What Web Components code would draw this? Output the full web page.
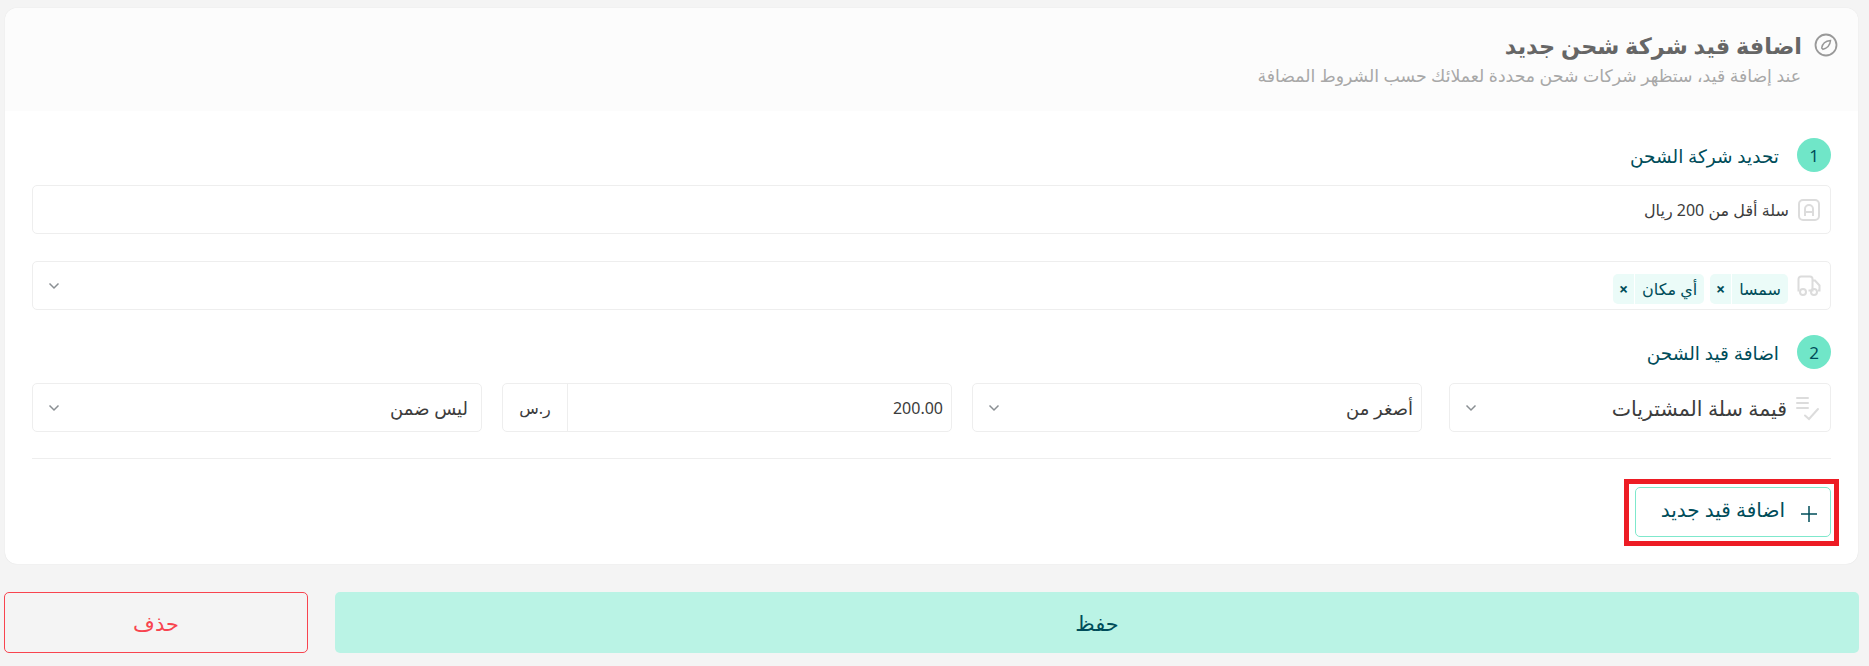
<!DOCTYPE html>
<html lang="ar" dir="rtl">
<head>
<meta charset="utf-8">
<title>اضافة قيد شركة شحن جديد</title>
<style>
html, body { margin: 0; background: #f4f4f4; }
body { font-family: "Noto Sans", "DejaVu Sans", sans-serif; color: #333; }
</style>
</head>
<body>
<rule-page>
  <rule-card>
    <card-head slot="head" title-text="اضافة قيد شركة شحن جديد" sub="عند إضافة قيد، ستظهر شركات شحن محددة لعملائك حسب الشروط المضافة"></card-head>

    <step-title num="1">تحديد شركة الشحن</step-title>
    <form-field icon="name" class="first">سلة أقل من 200 ريال</form-field>
    <form-field icon="truck" arrow class="second">
      <tag-chip>سمسا</tag-chip>
      <tag-chip>أي مكان</tag-chip>
    </form-field>

    <step-title num="2" class="step2">اضافة قيد الشحن</step-title>
    <condition-row>
      <form-field icon="list" arrow class="col-one big">قيمة سلة المشتريات</form-field>
      <form-field arrow class="mid">أصغر من</form-field>
      <form-field unit="ر.س">200.00</form-field>
      <form-field arrow class="mid last">ليس ضمن</form-field>
    </condition-row>

    <add-rule>اضافة قيد جديد</add-rule>
  </rule-card>
  <page-actions></page-actions>
</rule-page>

<script>
"use strict";
const icons = {
    name: `<svg width="24" height="24" viewBox="0 0 24 24" fill="none" stroke="#dcdcdc" stroke-width="2"><rect x="2" y="2" width="20" height="20" rx="4"/><path d="M8 18v-7a4 4 0 0 1 8 0v7M8 14h8"/></svg>`,
    truck: `<svg width="25" height="22" viewBox="0 0 25 22" fill="none" stroke="#dcdcdc" stroke-width="2"><path d="M3.500 15.500h-1V4a2.500 2.500 0 0 1 2.500-2.500h9a2.500 2.500 0 0 1 2.500 2.500v11.500h-4M16.500 5.500h2.500l4.500 5v5h-1.500M16.500 15.500h1"/><circle cx="7" cy="17" r="3"/><circle cx="18" cy="17" r="3"/></svg>`,
    list: `<svg width="26" height="26" viewBox="0 0 26 26" fill="none" stroke="#dcdcdc" stroke-width="2" stroke-linecap="round"><path d="M2 3h11M2 8h11M2 13h11"/><path d="M10 20.500l4 3.500 9-10"/></svg>`
};

class RulePage extends HTMLElement {
    constructor() {
        super();
        this.attachShadow({ mode: 'open' });
        this.shadowRoot.innerHTML = `
            <style>
:host {
    display: flex;
    flex-direction: column;
    padding: 8px 10px 13px 4px;
    gap: 28px;
}
            </style>
            <slot></slot>
        `;
    }
}

class RuleCard extends HTMLElement {
    constructor() {
        super();
        this.attachShadow({ mode: 'open' });
        this.shadowRoot.innerHTML = `
            <style>
:host {
    display: block;
    margin: 0 1px;
    background: #fff;
    border-radius: 12px;
    box-shadow: 0 0 1px rgba(0, 0, 0, 0.14);
}
#body {
    display: flex;
    flex-direction: column;
    padding: 27px 27px 27px;
}
            </style>
            <slot name="head"></slot>
            <div id="body"><slot></slot></div>
        `;
    }
}

class CardHead extends HTMLElement {
    constructor() {
        super();
        this.attachShadow({ mode: 'open' });
    }
    connectedCallback() {
        this.shadowRoot.innerHTML = `
            <style>
:host {
    display: block;
    height: 103px;
    box-sizing: border-box;
    padding: 24px 20px 0 0;
    background: #fcfcfc;
    border-radius: 12px 12px 0 0;
}
#top {
    display: flex;
    align-items: center;
    gap: 12px;
    height: 26px;
}
h1 {
    margin: 0;
    font-size: 22.400px;
    font-weight: 600;
    color: #666;
}
p {
    margin: 5px 37px 0 0;
    font-size: 17.300px;
    line-height: 26px;
    color: #a8a8a8;
}
            </style>
            <div id="top">
                <svg width="24" height="24" viewBox="0 0 24 24" fill="none" stroke="#999" stroke-width="1.800">
                    <circle cx="12" cy="12" r="10.500"/>
                    <path d="M16.500 7.500c-.4 4.500-2.300 7.300-7.500 8.800L7.700 15C8.300 10.800 11.500 8 16.500 7.500z" stroke-width="1.500"/>
                </svg>
                <h1>${this.getAttribute('title-text')}</h1>
            </div>
            <p>${this.getAttribute('sub')}</p>
        `;
    }
}

class StepTitle extends HTMLElement {
    constructor() {
        super();
        this.attachShadow({ mode: 'open' });
    }
    connectedCallback() {
        this.shadowRoot.innerHTML = `
            <style>
:host {
    display: flex;
    align-items: center;
    gap: 18px;
    height: 34px;
    font-size: 18.500px;
    font-weight: 500;
    color: #004d5a;
}
:host(.step2) { margin-top: 25px; }
#num {
    width: 34px;
    height: 34px;
    border-radius: 50%;
    background: #70e6c8;
    display: flex;
    align-items: center;
    justify-content: center;
    font-size: 17px;
    font-weight: 400;
}
            </style>
            <span id="num">${this.getAttribute('num')}</span>
            <span><slot></slot></span>
        `;
    }
}

class FormField extends HTMLElement {
    constructor() {
        super();
        this.attachShadow({ mode: 'open' });
    }
    connectedCallback() {
        const icon = icons[this.getAttribute('icon')] || '';
        const unit = this.getAttribute('unit');
        this.shadowRoot.innerHTML = `
            <style>
:host {
    display: flex;
    align-items: center;
    box-sizing: border-box;
    height: 49px;
    background: #fff;
    border: 1px solid #eee;
    border-radius: 5px;
    font-size: 16px;
    color: #3c3c3c;
}
:host(.first) { margin-top: 13px; }
:host(.second) { margin-top: 27px; }
:host(.col-one) { margin-left: 7px; }
:host(.big) { font-size: 20.500px; }
:host(.mid) { font-size: 18px; }
#icon {
    display: flex;
    align-items: center;
    flex: none;
    padding-right: 9px;
}
#value {
    flex: 1;
    display: flex;
    align-items: center;
    gap: 6px;
    padding: 0 8px 0 0;
    min-width: 0;
}
:host(.last) #value { padding-right: 13px; }
#arrow {
    flex: none;
    margin-left: 15px;
}
#unit {
    flex: none;
    align-self: stretch;
    width: 64px;
    display: flex;
    align-items: center;
    justify-content: center;
    border-right: 1px solid #eee;
}
            </style>
            ${icon ? `<span id="icon">${icon}</span>` : ''}
            <span id="value"><slot></slot></span>
            ${this.hasAttribute('arrow') ? `<svg id="arrow" width="12" height="8" viewBox="0 0 12 8" fill="none" stroke="#8a8f93" stroke-width="1.500"><path d="M1.500 1.500 6 6l4.500-4.500"/></svg>` : ''}
            ${unit ? `<span id="unit">${unit}</span>` : ''}
        `;
    }
}

class TagChip extends HTMLElement {
    constructor() {
        super();
        this.attachShadow({ mode: 'open' });
        this.shadowRoot.innerHTML = `
            <style>
:host {
    display: inline-flex;
    align-items: center;
    height: 30px;
    margin-top: 7px;
    background: #ebfbf8;
    border-radius: 5px;
    font-size: 16px;
    color: #004d5a;
}
#label {
    padding: 0 7px 0 7px;
    line-height: 30px;
    border-left: 1px solid #fff;
}
#x {
    width: 21px;
    text-align: center;
    font-size: 16px;
    font-weight: 700;
}
            </style>
            <span id="label"><slot></slot></span>
            <span id="x">×</span>
        `;
    }
}

class ConditionRow extends HTMLElement {
    constructor() {
        super();
        this.attachShadow({ mode: 'open' });
        this.shadowRoot.innerHTML = `
            <style>
:host {
    display: grid;
    grid-template-columns: 389px 1fr 1fr 1fr;
    column-gap: 20px;
    margin-top: 14px;
    padding-bottom: 26px;
    border-bottom: 1px solid #eee;
}
            </style>
            <slot></slot>
        `;
    }
}

class AddRule extends HTMLElement {
    constructor() {
        super();
        this.attachShadow({ mode: 'open' });
        this.shadowRoot.innerHTML = `
            <style>
:host {
    display: block;
    position: relative;
    align-self: flex-start;
    margin-top: 28px;
}
button {
    display: flex;
    align-items: center;
    gap: 15px;
    box-sizing: border-box;
    width: 196px;
    height: 50px;
    padding: 0 12px 0 0;
    background: #fff;
    border: 1px solid #7fe8cc;
    border-radius: 5px;
    font: inherit;
    font-size: 20px;
    color: #004d5a;
}
svg { margin-top: 4px; }
#label { margin-bottom: 6px; }
#mark {
    position: absolute;
    inset: -8px -8px -9px -11px;
    border: 5px solid #ed1c24;
    pointer-events: none;
}
            </style>
            <button>
                <svg width="18" height="18" viewBox="0 0 18 18" fill="none" stroke="#004d5a" stroke-width="1.500"><path d="M9 1v16M1 9h16"/></svg>
                <span id="label"><slot></slot></span>
            </button>
            <div id="mark"></div>
        `;
    }
}

class PageActions extends HTMLElement {
    constructor() {
        super();
        this.attachShadow({ mode: 'open' });
        this.shadowRoot.innerHTML = `
            <style>
:host {
    display: flex;
    gap: 27px;
    height: 61px;
}
button {
    font: inherit;
    font-size: 21px;
    border-radius: 5px;
}
#save {
    flex: 1;
    background: #baf3e5;
    border: 0;
    color: #004d5a;
}
#remove {
    width: 304px;
    background: #f4f4f4;
    border: 1px solid #f8444f;
    color: #f8444f;
}
            </style>
            <button id="save">حفظ</button>
            <button id="remove">حذف</button>
        `;
    }
}

customElements.define('rule-page', RulePage);
customElements.define('rule-card', RuleCard);
customElements.define('card-head', CardHead);
customElements.define('step-title', StepTitle);
customElements.define('form-field', FormField);
customElements.define('tag-chip', TagChip);
customElements.define('condition-row', ConditionRow);
customElements.define('add-rule', AddRule);
customElements.define('page-actions', PageActions);
</script>
</body>
</html>
